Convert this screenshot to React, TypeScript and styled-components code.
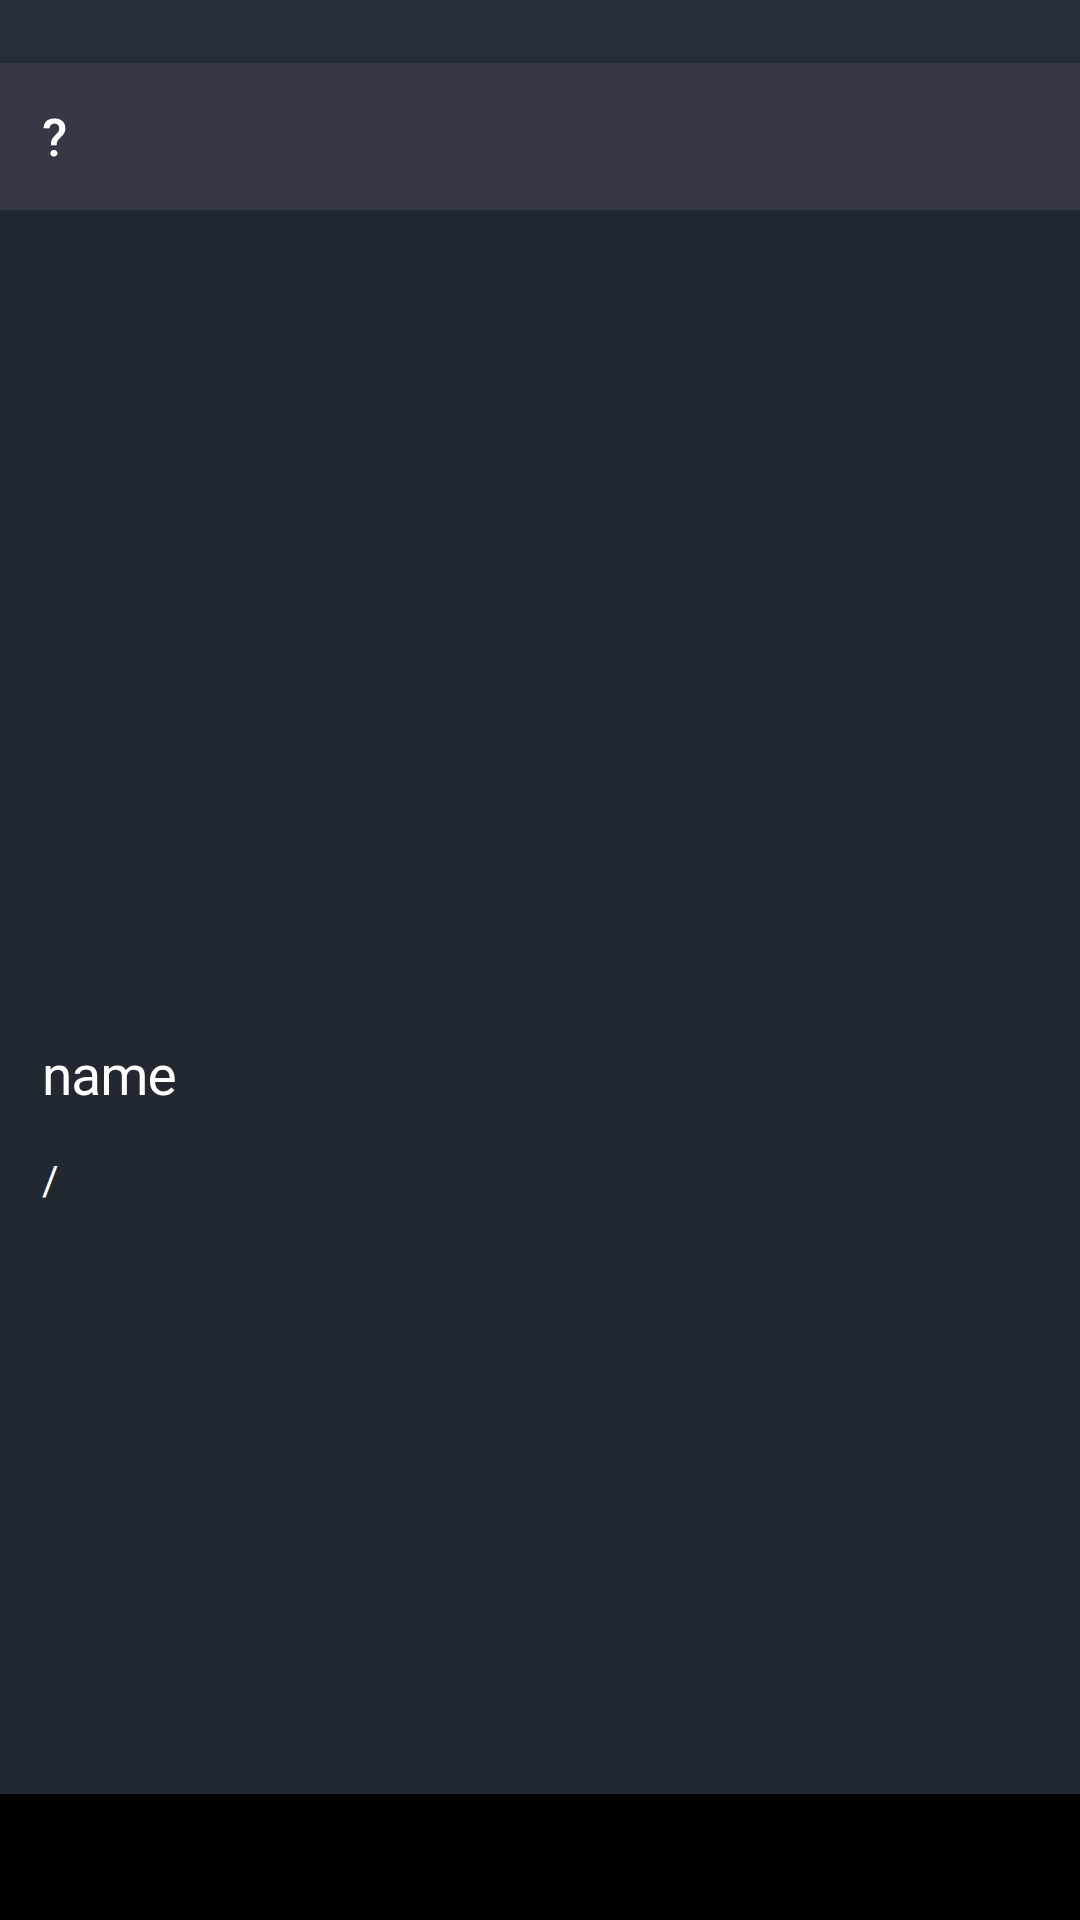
import React from "react";
import styled, { createGlobalStyle } from "styled-components";

const GlobalStyle = createGlobalStyle`
  html, body {
    margin: 0;
    padding: 0;
    background: #000;
  }
  body {
    font-family: Roboto, "Noto Sans", sans-serif;
    color: #fff;
  }
`;

const Screen = styled.div`
  width: 1080px;
  height: 1920px;
  display: flex;
  flex-direction: column;
  background: #000;
`;

const StatusBar = styled.div`
  height: 63px;
  background: #272d37;
`;

const Toolbar = styled.div`
  height: 147px;
  background: #343945;
  display: flex;
  align-items: center;
  padding: 4px 42px 0;
  box-sizing: border-box;
`;

const ToolbarTitle = styled.span`
  font-size: 52px;
  font-weight: 500;
  line-height: 1;
  color: #fff;
`;

const Content = styled.main`
  height: 1584px;
  background: #222831;
  display: flex;
  flex-direction: column;
  padding: 839px 42px 0;
  box-sizing: border-box;
`;

const Name = styled.div`
  font-size: 55px;
  line-height: 1;
  letter-spacing: -1px;
  color: #fff;
`;

const Path = styled.div`
  margin-top: 58px;
  font-size: 40px;
  line-height: 1;
  color: #fff;
`;

const NavBar = styled.div`
  flex: 1;
  background: #000;
`;

export default function App() {
  return (
    <>
      <GlobalStyle />
      <Screen>
        <StatusBar />
        <Toolbar>
          <ToolbarTitle>?</ToolbarTitle>
        </Toolbar>
        <Content>
          <Name>name</Name>
          <Path>/</Path>
        </Content>
        <NavBar />
      </Screen>
    </>
  );
}
